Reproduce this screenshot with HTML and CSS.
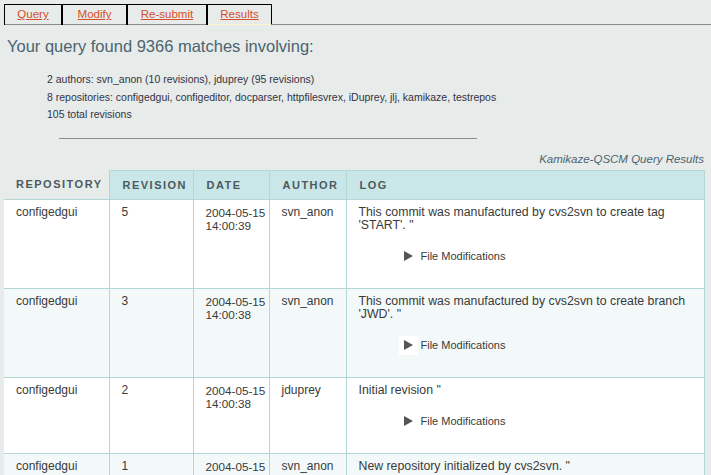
FILE: index.html
```html
<!DOCTYPE html>
<html>
<head>
<meta charset="utf-8">
<link rel="stylesheet" href="styles.css">
</head>
<body>
<div class="tabs">
  <div class="tab t1"><a href="#">Query</a></div>
  <div class="tab t2"><a href="#">Modify</a></div>
  <div class="tab t3"><a href="#">Re-submit</a></div>
  <div class="tab t4 active"><a href="#">Results</a></div>
</div>
<h1 class="title">Your query found 9366 matches involving:</h1>
<div class="summary">
  <div>2 authors: svn_anon (10 revisions), jduprey (95 revisions)</div>
  <div>8 repositories: configedgui, configeditor, docparser, httpfilesvrex, iDuprey, jlj, kamikaze, testrepos</div>
  <div>105 total revisions</div>
</div>
<div class="rule"></div>
<div class="caption">Kamikaze-QSCM Query Results</div>
<table class="results">
  <colgroup>
    <col class="w-repo"><col class="w-rev"><col class="w-date"><col class="w-auth"><col class="w-log">
  </colgroup>
  <thead>
    <tr>
      <th class="first">Repository</th>
      <th>Revision</th>
      <th>Date</th>
      <th>Author</th>
      <th>Log</th>
    </tr>
  </thead>
  <tbody>
    <tr>
      <td>configedgui</td><td>5</td><td class="date">2004-05-15<br>14:00:39</td><td>svn_anon</td>
      <td class="log"><div class="msg">This commit was manufactured by cvs2svn to create tag 'START'. "</div>
        <div class="mods"><span class="tri"><svg width="9" height="10" viewBox="0 0 9 10"><path d="M0 0 L9 5 L0 10 Z" fill="#555"/></svg></span>File Modifications</div></td>
    </tr>
    <tr class="alt">
      <td>configedgui</td><td>3</td><td class="date">2004-05-15<br>14:00:38</td><td>svn_anon</td>
      <td class="log"><div class="msg">This commit was manufactured by cvs2svn to create branch 'JWD'. "</div>
        <div class="mods"><span class="tri"><svg width="9" height="10" viewBox="0 0 9 10"><path d="M0 0 L9 5 L0 10 Z" fill="#555"/></svg></span>File Modifications</div></td>
    </tr>
    <tr>
      <td>configedgui</td><td>2</td><td class="date">2004-05-15<br>14:00:38</td><td>jduprey</td>
      <td class="log"><div class="msg">Initial revision "</div>
        <div class="mods"><span class="tri"><svg width="9" height="10" viewBox="0 0 9 10"><path d="M0 0 L9 5 L0 10 Z" fill="#555"/></svg></span>File Modifications</div></td>
    </tr>
    <tr class="alt">
      <td>configedgui</td><td>1</td><td class="date">2004-05-15<br>14:00:38</td><td>svn_anon</td>
      <td class="log"><div class="msg">New repository initialized by cvs2svn. "</div>
        <div class="mods"><span class="tri"><svg width="9" height="10" viewBox="0 0 9 10"><path d="M0 0 L9 5 L0 10 Z" fill="#555"/></svg></span>File Modifications</div></td>
    </tr>
  </tbody>
</table>
</body>
</html>
```
FILE: styles.css
```css
html, body {
  margin: 0;
  padding: 0;
  background: #e7ebea;
  font-family: "Liberation Sans", Arial, sans-serif;
  color: #333;
}
body {
  padding: 4px 0 0 4px;
}
.tabs {
  display: flex;
  height: 20px;
  border-bottom: 1px solid #8a8a8a;
}
.tab {
  box-sizing: border-box;
  height: 21px;
  border: 1px solid #000;
  border-bottom: none;
  border-right-width: 2px;
  text-align: center;
  font-size: 11.5px;
  line-height: 18px;
}
.tab.t1 { width: 59px; }
.tab.t2 { width: 65px; border-left: none; }
.tab.t3 { width: 80px; border-left: none; }
.tab.t4 { width: 64px; border-left: none; border-right-width: 1px; }
.tab.active {
  border-bottom: 1px solid #fbf7d0;
}
.tab a {
  color: #d4502c;
  text-decoration: underline;
}
.title {
  margin: 11px 0 0 3px;
  font-size: 16.5px;
  font-weight: normal;
  color: #4b6470;
  line-height: 20px;
}
.summary {
  margin: 15px 0 0 43px;
  font-size: 10.5px;
  line-height: 17.5px;
  color: #334;
}
.rule {
  margin: 14px 0 0 55px;
  width: 418px;
  height: 1px;
  background: #8a8a8a;
}
.caption {
  margin: 13px 7px 0 0;
  text-align: right;
  font-style: italic;
  font-size: 11.5px;
  color: #4b6470;
  line-height: 14px;
}
.results {
  margin-top: 4px;
  width: 700px;
  table-layout: fixed;
  border-collapse: collapse;
  font-size: 12px;
  color: #3a3a3a;
}
.w-repo { width: 105px; }
.w-rev { width: 84px; }
.w-date { width: 76px; }
.w-auth { width: 77px; }
.w-log { width: 358px; }
.results th {
  height: 28px;
  padding: 0 0 0 13px;
  text-align: left;
  text-transform: uppercase;
  letter-spacing: 1.5px;
  font-size: 11px;
  font-weight: bold;
  color: #4c5a60;
  background: #c9e7e8;
  border: 1px solid #b3d6d6;
  white-space: nowrap;
}
.results th.first {
  background: transparent;
  border-top: none;
  border-left: none;
  padding-left: 12px;
}
.results td {
  vertical-align: top;
  padding: 6px 6px 0 12px;
  background: #fff;
  border: 1px solid #b3d6d6;
  line-height: 13px;
}
.results td.date { white-space: nowrap; padding-right: 0; font-size: 11.7px; }
.results td:first-child { border-left: none; }
.results tr.alt td { background: #f3f9f9; }
.results td.log { padding-bottom: 22px; font-size: 12.3px; }
.mods {
  margin: 15px 0 0 40px;
  display: flex;
  align-items: center;
  font-size: 11px;
  line-height: 18px;
}
.tri {
  display: inline-flex;
  align-items: center;
  justify-content: center;
  width: 19px;
  height: 19px;
  background: #fff;
  margin-right: 3px;
}
```
